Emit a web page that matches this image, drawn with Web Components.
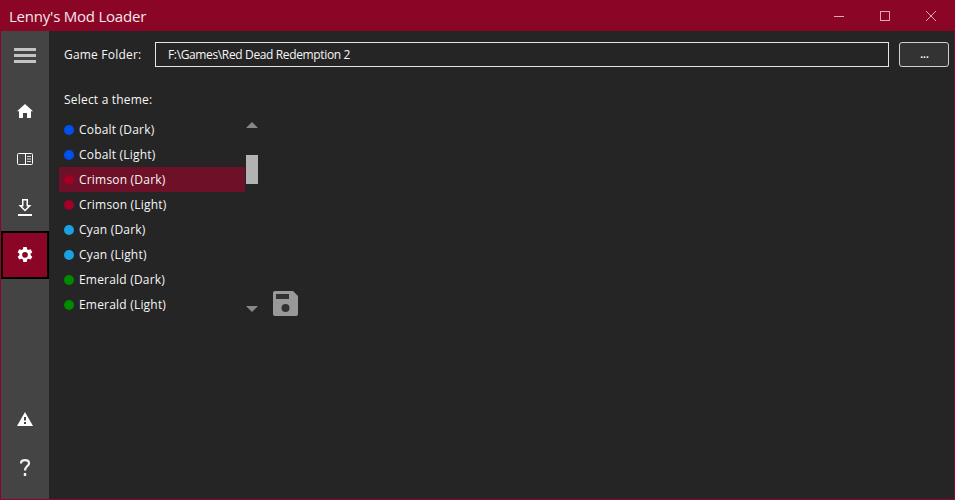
<!DOCTYPE html>
<html>
<head>
<meta charset="utf-8">
<title>Lenny's Mod Loader</title>
<style>
html, body { margin: 0; height: 100%; background: #252525; }
body { font-family: "Open Sans", "Noto Sans", sans-serif; font-size: 12px; letter-spacing: .2px; color: #f6f6f6; overflow: hidden; }
</style>
</head>
<body>
<lml-window>
  <lml-titlebar slot="title">Lenny's Mod Loader</lml-titlebar>
  <lml-sidebar slot="side">
    <lml-navbtn icon="menu"></lml-navbtn>
    <lml-navbtn icon="home"></lml-navbtn>
    <lml-navbtn icon="book"></lml-navbtn>
    <lml-navbtn icon="download"></lml-navbtn>
    <lml-navbtn icon="gear" active></lml-navbtn>
    <lml-navbtn icon="warn" slot="bottom"></lml-navbtn>
    <lml-navbtn icon="help" slot="bottom"></lml-navbtn>
  </lml-sidebar>
  <lml-settings>
    <lml-folder path="F:\Games\Red Dead Redemption 2">Game Folder:</lml-folder>
    <lml-themes>
      <lml-theme color="#0050ef">Cobalt (Dark)</lml-theme>
      <lml-theme color="#0050ef">Cobalt (Light)</lml-theme>
      <lml-theme color="#a20025" selected>Crimson (Dark)</lml-theme>
      <lml-theme color="#a20025">Crimson (Light)</lml-theme>
      <lml-theme color="#1ba1e2">Cyan (Dark)</lml-theme>
      <lml-theme color="#1ba1e2">Cyan (Light)</lml-theme>
      <lml-theme color="#008a00">Emerald (Dark)</lml-theme>
      <lml-theme color="#008a00">Emerald (Light)</lml-theme>
    </lml-themes>
  </lml-settings>
</lml-window>

<script>
const ICONS = {
  menu: `<svg width="22" height="15" viewBox="0 0 22 15" fill="#c4c4c4"><rect y="0" width="22" height="3"/><rect y="6" width="22" height="3"/><rect y="12" width="22" height="3"/></svg>`,
  home: `<svg width="16" height="14" viewBox="0 0 16 14" fill="#fff"><path d="M8 0 L16 7.2 L14 7.2 L14 14 L10 14 L10 9 L6 9 L6 14 L2 14 L2 7.2 L0 7.2 Z"/></svg>`,
  book: `<svg width="16" height="12" viewBox="0 0 16 12"><rect x=".5" y=".5" width="15" height="11" rx="1" fill="none" stroke="#fff"/><path d="M8.5 .5V11.5" stroke="#fff"/><path d="M10 3.5h4M10 6h4M10 8.5h4" stroke="#d8d8d8"/></svg>`,
  download: `<svg width="14" height="17" viewBox="0 0 14 17" fill="#fff"><path d="M4 0 H10 V6 H13.5 L7 12.5 L.5 6 H4 Z M5.5 1.5 V7.5 H4 L7 10.5 L10 7.5 H8.5 V1.5 Z" fill-rule="evenodd"/><rect y="15" width="14" height="2"/></svg>`,
  gear: `<svg width="16" height="16" viewBox="0 0 24 24" fill="#fff"><path fill-rule="evenodd" d="M9.5 0h5l.7 3.4 2 1.1 3.3-1.1 2.5 4.3-2.6 2.3v2.3l2.6 2.3-2.5 4.3-3.3-1.1-2 1.1-.7 3.5h-5l-.7-3.5-2-1.1-3.3 1.1L1 14.6l2.6-2.3V10L1 7.7l2.5-4.3 3.3 1.1 2-1.1zM12 7.5a4 4 0 1 0 0 8.6 4 4 0 0 0 0-8.6z"/></svg>`,
  warn: `<svg width="16" height="14" viewBox="0 0 16 14"><path d="M8 0 L16 14 H0 Z" fill="#fff"/><rect x="7" y="5" width="2" height="3.5" fill="#444"/><rect x="7" y="10" width="2" height="2" fill="#444"/></svg>`,
  help: `<svg width="10" height="17" viewBox="0 0 10 17" fill="none" stroke="#f2f2f2" stroke-width="2.2"><path d="M1 4.4 C1 2.3 2.7 1.1 5 1.1 C7.4 1.1 9 2.4 9 4.2 C9 7 5 7.2 5 11.5"/><rect x="3.8" y="14" width="2.4" height="3" fill="#f2f2f2" stroke="none"/></svg>`
};

class LmlWindow extends HTMLElement {
  constructor() {
    super();
    this.attachShadow({ mode: "open" }).innerHTML = `
      <style>
      :host { display: flex; flex-direction: column; box-sizing: border-box; width: 955px; height: 500px;
              border: solid #8a0526; border-width: 0 1px 1px 1px; background: #252525; }
      .body { flex: 1; display: flex; min-height: 0; }
      </style>
      <slot name="title"></slot>
      <div class="body"><slot name="side"></slot><slot></slot></div>`;
  }
}

class LmlTitlebar extends HTMLElement {
  constructor() {
    super();
    this.attachShadow({ mode: "open" }).innerHTML = `
      <style>
      :host { display: flex; align-items: center; height: 31px; margin: 0 -1px; background: #8a0526; }
      .name { flex: 1; padding-left: 9px; font-size: 15px; letter-spacing: -.22px; color: #f7e6ea; }
      .btns { display: flex; align-items: center; padding-right: 1px; }
      .btns span { display: flex; box-sizing: border-box; width: 46px; height: 31px; padding-top: 1px; align-items: center; justify-content: center; }
      </style>
      <div class="name"><slot></slot></div>
      <div class="btns">
        <span><svg width="10" height="10" viewBox="0 0 10 10"><path d="M0 5.5H10" stroke="#dfa9b6"/></svg></span>
        <span><svg width="10" height="10" viewBox="0 0 10 10"><rect x=".5" y=".5" width="9" height="9" fill="none" stroke="#dfa9b6"/></svg></span>
        <span><svg width="10" height="10" viewBox="0 0 10 10"><path d="M0 0L10 10M10 0L0 10" stroke="#dfa9b6"/></svg></span>
      </div>`;
  }
}

class LmlSidebar extends HTMLElement {
  constructor() {
    super();
    this.attachShadow({ mode: "open" }).innerHTML = `
      <style>
      :host { display: flex; flex-direction: column; justify-content: space-between; width: 48px; padding-bottom: 8px; background: #444; flex: none; }
      .top { display: flex; flex-direction: column; }
      .top ::slotted(:first-child) { margin-bottom: 8px; }
      .bottom { display: flex; flex-direction: column; }
      </style>
      <div class="top"><slot></slot></div>
      <div class="bottom"><slot name="bottom"></slot></div>`;
  }
}

class LmlNavbtn extends HTMLElement {
  constructor() {
    super();
    const active = this.hasAttribute("active");
    this.attachShadow({ mode: "open" }).innerHTML = `
      <style>
      :host { display: flex; box-sizing: border-box; width: 48px; height: 48px; align-items: center; justify-content: center;
              ${active ? "background: #8a0526; border: 2px solid #000;" : ""} }
      svg { display: block; }
      </style>
      ${ICONS[this.getAttribute("icon")]}`;
  }
}

class LmlSettings extends HTMLElement {
  constructor() {
    super();
    this.attachShadow({ mode: "open" }).innerHTML = `
      <style>
      :host { display: flex; flex-direction: column; flex: 1; min-width: 0; padding: 11px 5px 0 10px; background: #252525; }
      </style>
      <slot></slot>`;
  }
}

class LmlFolder extends HTMLElement {
  constructor() {
    super();
    this.attachShadow({ mode: "open" }).innerHTML = `
      <style>
      :host { display: flex; align-items: stretch; height: 25px; }
      label { width: 96px; padding-left: 5px; box-sizing: border-box; line-height: 25px; flex: none; }
      .path { flex: 1; box-sizing: border-box; border: 1px solid #e6e6e6; padding-left: 12px; line-height: 23px; letter-spacing: -.36px; }
      button { width: 50px; margin-left: 10px; box-sizing: border-box; padding: 0 0 0 1px; border: 1px solid #d0d0d0; border-radius: 3px; background: #333;
               color: #fff; font: bold 10px "Open Sans", sans-serif; line-height: 23px; }
      </style>
      <label><slot></slot></label>
      <div class="path">${this.getAttribute("path")}</div>
      <button>...</button>`;
  }
}

class LmlThemes extends HTMLElement {
  constructor() {
    super();
    this.attachShadow({ mode: "open" }).innerHTML = `
      <style>
      :host { display: block; }
      .label { padding: 22px 0 0 5px; height: 28px; line-height: 22px; }
      .row { display: flex; align-items: stretch; }
      .list { width: 186px; display: flex; flex-direction: column; }
      .bar { width: 12px; margin-left: 1px; display: flex; flex-direction: column; align-items: center; }
      .up { margin-top: 5px; width: 0; height: 0; border: solid transparent; border-width: 0 6px 6px; border-bottom-color: #888; }
      .thumb { margin-top: 27px; width: 12px; height: 29px; background: #b3b3b3; }
      .down { margin-top: auto; margin-bottom: 5px; width: 0; height: 0; border: solid transparent; border-width: 6px 6px 0; border-top-color: #888; }
      .save { margin: auto 0 1px 15px; display: block; }
      </style>
      <div class="label">Select a theme:</div>
      <div class="row">
        <div class="list"><slot></slot></div>
        <div class="bar"><div class="up"></div><div class="thumb"></div><div class="down"></div></div>
        <svg class="save" width="25" height="25" viewBox="0 0 25 25">
          <path fill="#999" d="M2 0H20L25 5V23a2 2 0 0 1-2 2H2a2 2 0 0 1-2-2V2a2 2 0 0 1 2-2Z"/>
          <rect x="3" y="3" width="13" height="5" fill="#333"/>
          <circle cx="12.5" cy="17" r="4" fill="#333"/>
        </svg>
      </div>`;
  }
}

class LmlTheme extends HTMLElement {
  constructor() {
    super();
    const selected = this.hasAttribute("selected");
    this.attachShadow({ mode: "open" }).innerHTML = `
      <style>
      :host { display: flex; align-items: center; height: 25px; padding-left: 5px; ${selected ? "background: #6e1027;" : ""} }
      i { width: 10px; height: 10px; border-radius: 50%; background: ${this.getAttribute("color")}; margin-right: 5px; flex: none; }
      </style>
      <i></i><slot></slot>`;
  }
}

customElements.define("lml-window", LmlWindow);
customElements.define("lml-titlebar", LmlTitlebar);
customElements.define("lml-sidebar", LmlSidebar);
customElements.define("lml-navbtn", LmlNavbtn);
customElements.define("lml-settings", LmlSettings);
customElements.define("lml-folder", LmlFolder);
customElements.define("lml-themes", LmlThemes);
customElements.define("lml-theme", LmlTheme);
</script>
</body>
</html>
